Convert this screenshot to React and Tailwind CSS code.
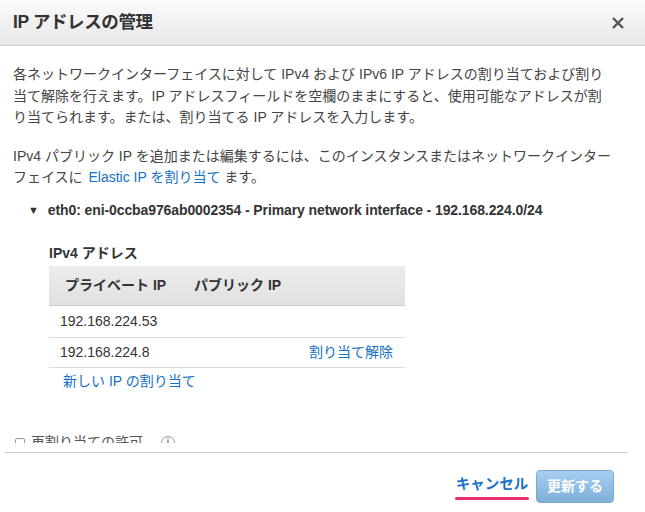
import React from "react";

function CloseIcon() {
  return (
    <svg width="14" height="14" viewBox="0 0 14 14" className="text-[#555]">
      <path d="M2 2 L12 12 M12 2 L2 12" stroke="currentColor" strokeWidth="2.4" strokeLinecap="butt" />
    </svg>
  );
}

export default function App() {
  const font = { fontFamily: '"Liberation Sans", "Noto Sans CJK JP", sans-serif' };

  return (
    <div className="w-[645px] h-[512px] bg-white overflow-hidden flex flex-col" style={font}>
      {/* Header */}
      <div className="h-[46px] shrink-0 flex items-center justify-between pl-[13px] pr-[20px] border-b border-[#cfcfcf] bg-gradient-to-b from-[#fbfbfb] to-[#e7e7e7]">
        <h1 className="text-[17.5px] font-bold text-[#333] tracking-[-0.4px]">IP アドレスの管理</h1>
        <button className="flex items-center">
          <CloseIcon />
        </button>
      </div>

      {/* Body */}
      <div className="h-[397px] shrink-0 overflow-hidden px-[13px] pt-[18px] text-[14px] leading-[21.5px] text-[#444]">
        <p className="whitespace-nowrap">
          各ネットワークインターフェイスに対して IPv4 および IPv6 IP アドレスの割り当ておよび割り
          <br />
          当て解除を行えます。IP アドレスフィールドを空欄のままにすると、使用可能なアドレスが割
          <br />
          り当てられます。または、割り当てる IP アドレスを入力します。
        </p>
        <p className="mt-[17px] whitespace-nowrap">
          IPv4 パブリック IP を追加または編集するには、このインスタンスまたはネットワークインター
          <br />
          フェイスに <a className="text-[#1670c4] ml-[2px]">Elastic IP を割り当て</a> ます。
        </p>

        {/* Interface */}
        <div className="mt-[11px] flex items-center gap-[9px] pl-[15px] text-[14px] font-semibold text-[#333] tracking-[-0.1px]">
          <span className="text-[11px] leading-none">▼</span>
          <span>eth0: eni-0ccba976ab0002354 - Primary network interface - 192.168.224.0/24</span>
        </div>

        <div className="pl-[36px] mt-[22px]">
          <div className="font-bold text-[#333] leading-[20px]">IPv4 アドレス</div>
          <div className="w-[356px] mt-[3px] text-[#333]">
            <div className="h-[40px] flex items-center font-bold bg-gradient-to-b from-[#ececec] to-[#e1e1e1] border-b border-[#cdcdcd]">
              <span className="w-[145px] pl-[16px]">プライベート IP</span>
              <span>パブリック IP</span>
            </div>
            <div className="h-[32px] flex items-center px-[11px] border-b border-[#dddddd]">192.168.224.53</div>
            <div className="h-[30px] flex items-center justify-between pl-[11px] pr-[12px] border-b border-[#dddddd]">
              <span>192.168.224.8</span>
              <a className="text-[#1670c4]">割り当て解除</a>
            </div>
            <div className="h-[28px] flex items-center pl-[14px]">
              <a className="text-[#1670c4]">新しい IP の割り当て</a>
            </div>
          </div>
        </div>

        <div className="mt-[36px] flex items-center gap-[6px] pl-[2px] text-[#555]">
          <span className="w-[10px] h-[10px] rounded-[2px] border border-[#999] bg-white"></span>
          <span>再割り当ての許可</span>
          <span className="ml-[12px] w-[14px] h-[14px] rounded-full border border-[#999] flex items-center justify-center text-[10px] text-[#888] font-bold">i</span>
        </div>
      </div>

      {/* Footer */}
      <div className="mx-[5px] mr-[17px] border-t border-[#cccccc] mt-[9px]"></div>
      <div className="flex items-center justify-end pr-[31px] pt-[17px] gap-[7px]">
        <div className="flex flex-col items-center">
          <a className="text-[14.5px] font-bold text-[#1b74c9] leading-[22px]">キャンセル</a>
          <span className="block w-[74px] h-[3px] rounded-full bg-[#ea2e6c] mt-[2px]"></span>
        </div>
        <button className="w-[78px] h-[33px] rounded-[4px] border border-[#7ea9d1] bg-gradient-to-b from-[#a6cff0] to-[#7eafd9] text-white font-bold text-[14px]">
          更新する
        </button>
      </div>
    </div>
  );
}
